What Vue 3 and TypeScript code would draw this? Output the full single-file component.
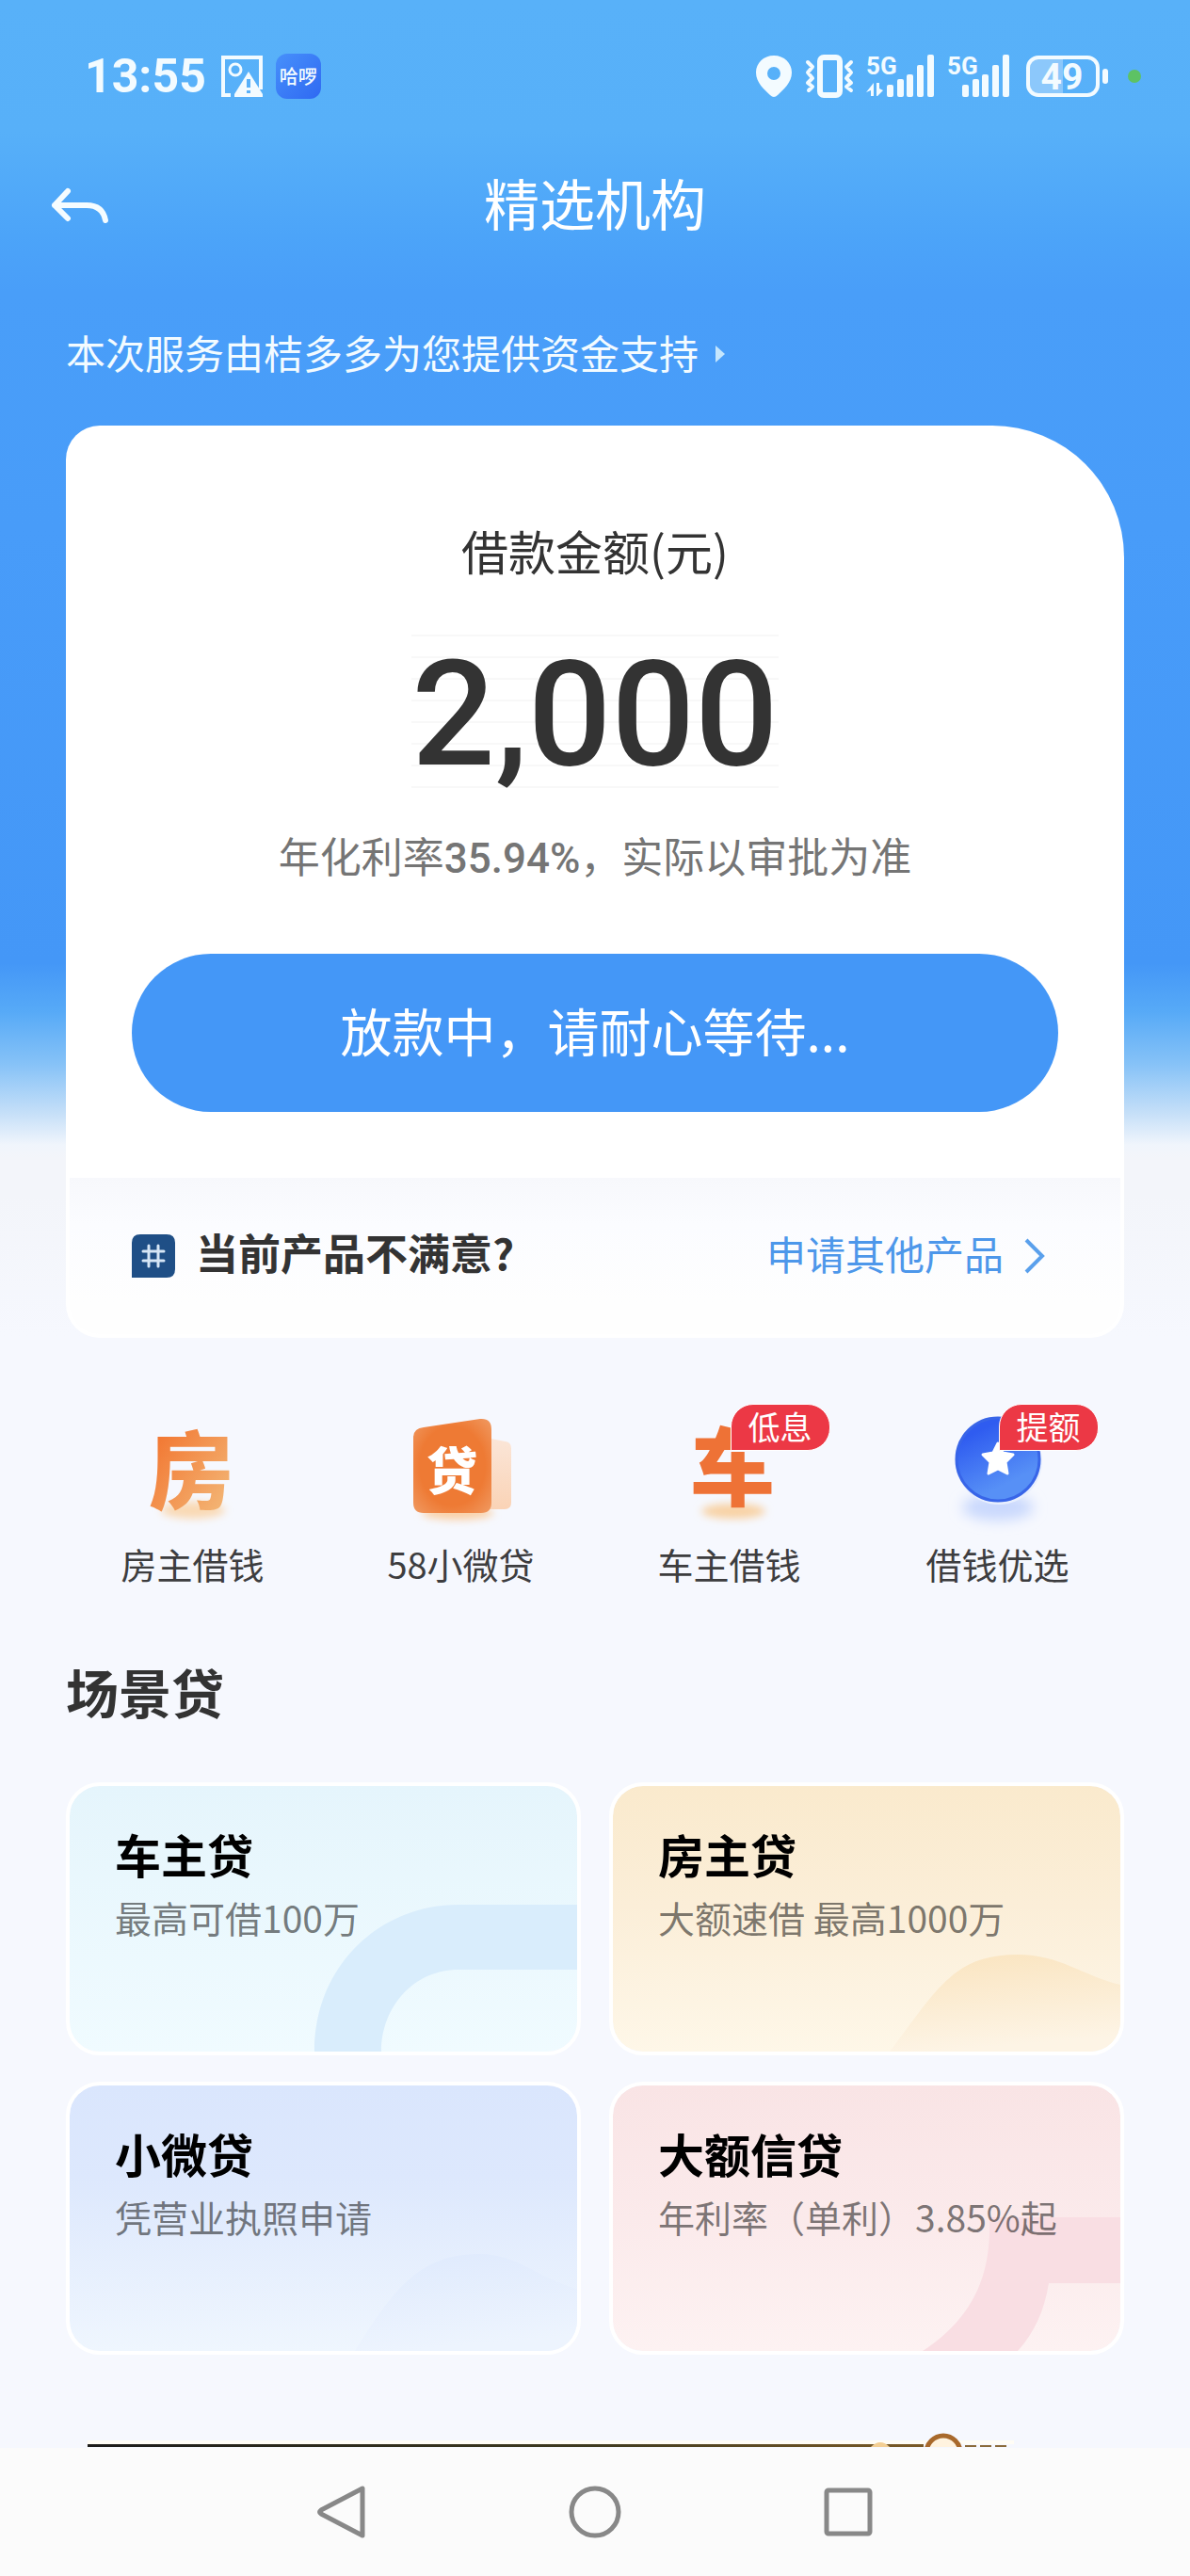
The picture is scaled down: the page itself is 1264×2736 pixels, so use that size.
<script setup lang="ts">
interface Shortcut {
  id: string
  label: string
  badge?: string
}

interface Scene {
  id: string
  title: string
  desc: string
}

const shortcuts: Shortcut[] = [
  { id: 'house', label: '房主借钱' },
  { id: 'micro', label: '58小微贷' },
  { id: 'car', label: '车主借钱', badge: '低息' },
  { id: 'best', label: '借钱优选', badge: '提额' },
]

const scenes: Scene[] = [
  { id: 'car', title: '车主贷', desc: '最高可借100万' },
  { id: 'house', title: '房主贷', desc: '大额速借 最高1000万' },
  { id: 'micro', title: '小微贷', desc: '凭营业执照申请' },
  { id: 'credit', title: '大额信贷', desc: '年利率（单利）3.85%起' },
]
</script>

<template>
  <div class="page">
    <div class="status">
      <div class="status-side">
        <span class="time">13:55</span>
        <svg class="img-icon" width="44" height="44" viewBox="0 0 44 44">
          <path d="M10 42H2V2H42V36" fill="none" stroke="#f3fbff" stroke-width="4" />
          <circle cx="15" cy="15" r="6" fill="none" stroke="#f3fbff" stroke-width="3" />
          <path d="M29 17L44 41V44H14V41Z" fill="#f3fbff" />
          <path d="M29 25V34M29 37V40" stroke="#58b0f9" stroke-width="4" />
        </svg>
        <span class="hello">哈啰</span>
      </div>
      <div class="status-side">
        <svg width="38" height="44" viewBox="0 0 38 44">
          <path fill-rule="evenodd" fill="#f3fbff" d="M19 0C8 0 0 8 0 18C0 29 9 36 15 42Q19 46 23 42C29 36 38 29 38 18C38 8 30 0 19 0ZM19 12A7 7 0 1 1 19 26A7 7 0 1 1 19 12Z" />
        </svg>
        <svg class="vibrate" width="53" height="46" viewBox="0 0 53 46" fill="none" stroke="#f3fbff" stroke-linejoin="round" stroke-linecap="round">
          <rect x="16" y="3" width="21" height="40" rx="4" stroke-width="6" />
          <path d="M3 8L8 13L3 19L8 25L3 30L8 34L4 38M49 8L44 13L49 19L44 25L49 30L44 34L49 38" stroke-width="4" />
        </svg>
        <svg class="signal" width="72" height="46" viewBox="0 0 72 46" fill="#f3fbff">
          <text class="net" x="0" y="21">5G</text>
          <path d="M0 40L8 30V44H5V38ZM11 30H14V36L18 38L12 44H11Z" />
          <rect x="22" y="32" width="7" height="13" rx="2" />
          <rect x="33" y="26" width="7" height="19" rx="2" />
          <rect x="43" y="21" width="7" height="24" rx="2" />
          <rect x="54" y="11" width="7" height="34" rx="2" />
          <rect x="65" y="0" width="7" height="45" rx="2" />
        </svg>
        <svg class="signal2" width="66" height="46" viewBox="0 0 66 46" fill="#f3fbff">
          <text class="net" x="0" y="21">5G</text>
          <rect x="16" y="32" width="7" height="13" rx="2" />
          <rect x="27" y="26" width="7" height="19" rx="2" />
          <rect x="37" y="21" width="7" height="24" rx="2" />
          <rect x="48" y="11" width="7" height="34" rx="2" />
          <rect x="59" y="0" width="7" height="45" rx="2" />
        </svg>
        <svg class="battery" width="88" height="44" viewBox="0 0 88 44">
          <path d="M13 3H39V41H13Q3 41 3 31V13Q3 3 13 3Z" fill="#8cc8fb" />
          <rect x="2" y="2" width="74" height="40" rx="11" fill="none" stroke="#f3fbff" stroke-width="4" />
          <rect x="81" y="14" width="6" height="16" rx="3" fill="#f3fbff" />
          <text class="level" x="38" y="36" text-anchor="middle">49</text>
        </svg>
        <span class="dot"></span>
      </div>
    </div>

    <header class="bar">
      <button class="back" type="button" aria-label="返回">
        <svg width="62" height="38" viewBox="0 0 62 38" fill="none" stroke="#f5fcff" stroke-width="6" stroke-linecap="round" stroke-linejoin="round">
          <path d="M18 4L4 19L18 33M4 19H38Q55 19 58 35" />
        </svg>
      </button>
      <h1>精选机构</h1>
    </header>

    <main>
      <a class="service" href="#">
        <span>本次服务由桔多多为您提供资金支持</span>
        <svg width="10" height="18" viewBox="0 0 10 18"><path d="M0 0L10 9L0 18Z" fill="#c5e6fd" /></svg>
      </a>

      <section class="loan">
        <div class="loan-label">借款金额(元)</div>
        <div class="amount">2,000</div>
        <div class="rate">年化利率<span class="num">35.94%</span>，实际以审批为准</div>
        <button class="submit" type="button">放款中，请耐心等待...</button>
        <div class="other">
          <svg width="46" height="46" viewBox="0 0 46 46">
            <path d="M9 0H37Q46 0 46 9V37Q46 46 37 46H0V9Q0 0 9 0Z" fill="#1f4f86" />
            <path d="M18 12V34M28 12V34M12 18H34M12 28H34" stroke="#d6e6f5" stroke-width="3" stroke-linecap="round" />
          </svg>
          <strong>当前产品不满意?</strong>
          <a href="#">
            <span>申请其他产品</span>
            <svg width="22" height="38" viewBox="0 0 22 38" fill="none" stroke="#5aa0ec" stroke-width="4">
              <path d="M2 2L19 19L2 36" />
            </svg>
          </a>
        </div>
      </section>

      <nav class="shortcuts">
        <a v-for="s in shortcuts" :key="s.id" href="#">
          <span class="icon">
            <svg v-if="s.id === 'house'" width="120" height="120" viewBox="0 0 120 120">
              <defs>
                <linearGradient id="gHouse" x1="0" y1="0" x2="1" y2="1">
                  <stop offset="0.1" stop-color="#f2702a" />
                  <stop offset="0.9" stop-color="#f3b878" />
                </linearGradient>
                <filter id="soft" x="-30%" y="-80%" width="160%" height="260%"><feGaussianBlur stdDeviation="4" /></filter>
              </defs>
              <ellipse cx="60" cy="107" rx="34" ry="9" fill="#f9d9b4" filter="url(#soft)" />
              <text class="glyph" x="58" y="98" text-anchor="middle" fill="url(#gHouse)">房</text>
            </svg>
            <svg v-else-if="s.id === 'micro'" width="120" height="120" viewBox="0 0 120 120">
              <defs>
                <linearGradient id="gPage" x1="0" y1="0" x2="0" y2="1">
                  <stop offset="0" stop-color="#fbe6d8" />
                  <stop offset="1" stop-color="#fad3b6" />
                </linearGradient>
                <radialGradient id="gBook" cx="0.5" cy="0.5" r="0.7">
                  <stop offset="0.6" stop-color="#ee7a34" />
                  <stop offset="1" stop-color="#f09a62" />
                </radialGradient>
              </defs>
              <ellipse cx="56" cy="110" rx="38" ry="7" fill="#f9cfa4" filter="url(#soft)" />
              <path d="M86 30L107 34Q113 35 113 41V99Q113 106 106 106H86Z" fill="url(#gPage)" />
              <path d="M20 19L80 10Q92 9 92 21V99Q92 110 81 110H20Q9 110 9 99V30Q9 20 20 19Z" fill="url(#gBook)" />
              <text class="mini-glyph" x="50" y="86" text-anchor="middle" fill="#fff">贷</text>
            </svg>
            <svg v-else-if="s.id === 'car'" width="120" height="120" viewBox="0 0 120 120">
              <ellipse cx="64" cy="108" rx="34" ry="8" fill="#f8d2a4" filter="url(#soft)" />
              <text class="glyph" x="63" y="95" text-anchor="middle" fill="#ee7236">车</text>
            </svg>
            <svg v-else width="120" height="120" viewBox="0 0 120 120">
              <defs>
                <linearGradient id="gCoin" x1="0.2" y1="0" x2="0.7" y2="1">
                  <stop offset="0.15" stop-color="#2f5cf0" />
                  <stop offset="0.8" stop-color="#5790f6" />
                </linearGradient>
                <filter id="softWide" x="-50%" y="-100%" width="200%" height="300%"><feGaussianBlur stdDeviation="7" /></filter>
              </defs>
              <ellipse cx="60" cy="104" rx="38" ry="14" fill="#c9d8fd" filter="url(#softWide)" />
              <circle cx="61" cy="55" r="46" fill="#e8effe" />
              <circle cx="60" cy="53" r="44" fill="url(#gCoin)" stroke="#3865e8" stroke-width="3" />
              <path d="M60 36L65 46L76 48L68 56L70 68L60 63L50 68L52 56L44 48L55 46Z" fill="#fff" stroke="#fff" stroke-width="3" stroke-linejoin="round" />
            </svg>
            <em v-if="s.badge" class="badge">{{ s.badge }}</em>
          </span>
          <span class="label">{{ s.label }}</span>
        </a>
      </nav>

      <section class="scene-block">
        <h2>场景贷</h2>
        <div class="scenes">
          <a v-for="s in scenes" :key="s.id" href="#" class="scene" :class="s.id">
            <svg class="deco" width="245" height="156" viewBox="294 126 245 156">
              <defs>
                <linearGradient id="gHill" x1="0" y1="0" x2="0.2" y2="1">
                  <stop offset="0" stop-color="#fae4bf" />
                  <stop offset="1" stop-color="#fdf4e5" />
                </linearGradient>
                <linearGradient id="gHillBlue" x1="0" y1="0" x2="0.2" y2="1">
                  <stop offset="0" stop-color="#dfeafd" />
                  <stop offset="1" stop-color="#edf4fe" />
                </linearGradient>
              </defs>
              <path v-if="s.id === 'car'" d="M260 282C260 190 330 126 413 126H539V195H413C366 195 331 234 331 282Z" fill="#d9edfc" />
              <path v-else-if="s.id === 'house'" d="M294 282C345 215 362 179 430 179C475 179 500 202 539 211V282Z" fill="url(#gHill)" />
              <path v-else-if="s.id === 'micro'" d="M303 282C345 215 372 179 436 179C475 179 500 206 539 216V282Z" fill="url(#gHillBlue)" />
              <path v-else d="M400 140C402 200 385 245 329 282H430C448 262 458 240 463 210H539V140Z" fill="#f9dee3" />
            </svg>
            <h3>{{ s.title }}</h3>
            <p>{{ s.desc }}</p>
          </a>
        </div>
      </section>

      <div class="banner">
        <svg width="996" height="16" viewBox="0 0 996 16">
          <defs>
            <linearGradient id="gEdge" x1="0" y1="0" x2="1" y2="0">
              <stop offset="0" stop-color="#1c1c1a" />
              <stop offset="0.6" stop-color="#3e3a1e" />
              <stop offset="1" stop-color="#7a5a26" />
            </linearGradient>
          </defs>
          <rect x="0" y="9" width="984" height="4" fill="#fffdf6" />
          <rect x="0" y="13" width="888" height="3" fill="url(#gEdge)" />
          <path d="M832 16Q842 6 852 16Z" fill="#f3cf94" />
          <path d="M932 15H980" stroke="#8a6a3a" stroke-width="2" stroke-dasharray="12 4" />
          <circle cx="909" cy="22" r="18" fill="#fff3df" stroke="#a8692c" stroke-width="5" />
        </svg>
      </div>
    </main>

    <footer class="sysnav">
      <button type="button" aria-label="返回上一页">
        <svg width="56" height="58" viewBox="0 0 56 58"><path d="M50 4V54L6 31Q3 29 6 27Z" /></svg>
      </button>
      <button type="button" aria-label="主屏幕">
        <svg width="56" height="58" viewBox="0 0 56 58"><circle cx="28" cy="29" r="25" /></svg>
      </button>
      <button type="button" aria-label="最近任务">
        <svg width="56" height="58" viewBox="0 0 56 58"><rect x="5" y="6" width="46" height="46" rx="2" /></svg>
      </button>
    </footer>
  </div>
</template>

<style>
body {
  background: #f6f8fe;
}
</style>

<style scoped>
.page {
  min-height: 100vh;
  display: flex;
  flex-direction: column;
  font-family: "Noto Sans CJK SC", "Noto Sans", sans-serif;
  color: #333;
  background: #f6f8fe linear-gradient(
    #58b1f9 0, #57b0f9 140px, #4ca4f9 250px, #499ef9 310px, #489cf9 560px, #4497f7 1023px,
    #57aaf7 1075px, #86c2f7 1130px, #c5dff8 1182px, #f0f5fc 1216px, #f3f5fa 1230px,
    #f3f5fa 1270px, #f6f8fe 1420px) no-repeat 0 0 / 100% 1420px;
}

a {
  color: inherit;
  text-decoration: none;
}

button {
  border: 0;
  padding: 0;
  background: none;
  font-family: inherit;
  cursor: pointer;
}

h1, h2, h3, p {
  margin: 0;
}

svg {
  display: block;
  flex: none;
}

/* status bar */
.status {
  height: 162px;
  padding: 0 52px 0 90px;
  display: flex;
  align-items: center;
  justify-content: space-between;
  color: #f3fbff;
}

.status svg {
  overflow: visible;
}

.status-side {
  display: flex;
  align-items: center;
}

.time {
  font-family: Roboto, sans-serif;
  font-size: 50px;
  font-weight: 700;
  line-height: 56px;
}

.img-icon {
  margin: 0 14px 0 16px;
}

.hello {
  width: 48px;
  height: 48px;
  border-radius: 12px;
  background: linear-gradient(135deg, #4790fb, #2f69f2);
  font-size: 20px;
  font-weight: 500;
  line-height: 48px;
  text-align: center;
}

.vibrate {
  margin-left: 14px;
}

.signal {
  margin-left: 12px;
}

.signal2 {
  margin-left: 14px;
}

.net {
  font-family: Roboto, sans-serif;
  font-size: 26px;
  font-weight: 700;
}

.battery {
  margin-left: 18px;
}

.level {
  font-family: Roboto, sans-serif;
  font-size: 39px;
  font-weight: 700;
  fill: #f3fbff;
}

.dot {
  width: 14px;
  height: 14px;
  margin-left: 20px;
  border-radius: 50%;
  background: #5dc264;
}

/* title bar */
.bar {
  height: 112px;
  padding: 0 54px;
  display: grid;
  grid-template-columns: 62px 1fr 62px;
  align-items: center;
}

.bar h1 {
  padding-bottom: 6px;
  font-size: 59px;
  font-weight: 400;
  line-height: 80px;
  text-align: center;
  color: #fff;
}

/* loan card */
.service {
  margin: 70px 70px 48px;
  display: flex;
  align-items: center;
  gap: 18px;
  font-size: 42px;
  line-height: 60px;
  color: #f3fbff;
}

.service svg {
  margin-top: 4px;
}

.loan {
  margin: 0 70px;
  padding-top: 102px;
  background: #fff;
  border-radius: 36px 140px 36px 36px;
  display: flex;
  flex-direction: column;
  align-items: center;
}

.loan-label {
  font-size: 50px;
  line-height: 60px;
}

.amount {
  margin-top: 60px;
  padding: 4px 0;
  font-family: Roboto, sans-serif;
  font-size: 156px;
  font-weight: 500;
  line-height: 162px;
  background: repeating-linear-gradient(#f8f8f8 0 2px, transparent 2px 23px);
}

.rate {
  margin-top: 34px;
  font-size: 44px;
  line-height: 60px;
  color: #757575;
}

.num {
  font-family: Roboto, sans-serif;
  font-weight: 500;
  line-height: 1;
}

.submit {
  align-self: stretch;
  height: 168px;
  margin: 75px 70px 70px;
  padding-bottom: 8px;
  border-radius: 84px;
  background: #4497f7;
  color: #fff;
  font-size: 55px;
}

.other {
  align-self: stretch;
  height: 166px;
  margin: 0 4px 4px;
  padding: 0 66px;
  border-radius: 0 0 32px 32px;
  background: linear-gradient(#f7f8fc, #fbfcff 30%, #fefefe 80%);
  display: flex;
  align-items: center;
  gap: 22px;
}

.other strong {
  padding-bottom: 8px;
  font-size: 45px;
  line-height: 60px;
}

.other a {
  margin-left: auto;
  margin-right: 14px;
  display: flex;
  align-items: center;
  gap: 22px;
  font-size: 42px;
  line-height: 60px;
  color: #4d97ea;
}

.other a span {
  padding-bottom: 6px;
}

/* shortcut row */
.shortcuts {
  margin: 76px 62px 0;
  display: grid;
  grid-template-columns: repeat(4, 1fr);
}

.shortcuts a {
  display: flex;
  flex-direction: column;
  align-items: center;
  gap: 20px;
}

.icon {
  position: relative;
}

.icon svg {
  overflow: visible;
}

.glyph {
  font-size: 90px;
  font-weight: 900;
}

.mini-glyph {
  font-size: 54px;
  font-weight: 900;
}

.badge {
  position: absolute;
  left: 61px;
  top: -6px;
  padding: 0 18px 2px;
  border: 1px solid #fff;
  border-radius: 24px 24px 24px 0;
  background: #ec3845;
  color: #fff;
  font-size: 34px;
  font-style: normal;
  line-height: 46px;
  white-space: nowrap;
}

.label {
  font-size: 38px;
  line-height: 48px;
  color: #3d3d3f;
}

/* scene cards */
.scene-block {
  margin: 76px 70px 0;
}

h2 {
  font-size: 56px;
  font-weight: 700;
  line-height: 70px;
}

.scenes {
  margin-top: 62px;
  display: grid;
  grid-template-columns: 1fr 1fr;
  gap: 28px 30px;
}

.scene {
  position: relative;
  overflow: hidden;
  box-sizing: border-box;
  min-height: 290px;
  padding: 42px 20px 42px 48px;
  border: 4px solid #fff;
  border-radius: 36px;
  background-clip: padding-box;
}

.deco {
  position: absolute;
  right: 0;
  bottom: 0;
  overflow: visible;
}

.scene h3 {
  position: relative;
  font-size: 49px;
  font-weight: 700;
  line-height: 60px;
  color: #000;
}

.scene p {
  position: relative;
  margin-top: 12px;
  font-size: 39px;
  line-height: 50px;
  color: rgba(0, 0, 0, 0.52);
}

.scene.car {
  background-image: linear-gradient(#e5f5fc, #f0fbff);
}

.scene.house {
  background-image: linear-gradient(#faeacd, #fbeed8 45%, #fef7e8);
}

.scene.micro {
  background-image: linear-gradient(#dae6fd, #dde8fd 35%, #eff6fe);
}

.scene.credit {
  background-image: linear-gradient(#f9e4e5, #fbeaeb 50%, #fdf2f2);
}

.banner {
  margin: 82px 70px 0;
  padding-left: 23px;
  overflow: hidden;
}

/* system navigation */
.sysnav {
  height: 136px;
  margin-top: auto;
  background: #fbfbfb;
  display: flex;
  align-items: center;
  justify-content: center;
  gap: 213px;
}

.sysnav svg {
  fill: none;
  stroke: #888;
  stroke-width: 5;
  stroke-linejoin: round;
}
</style>
